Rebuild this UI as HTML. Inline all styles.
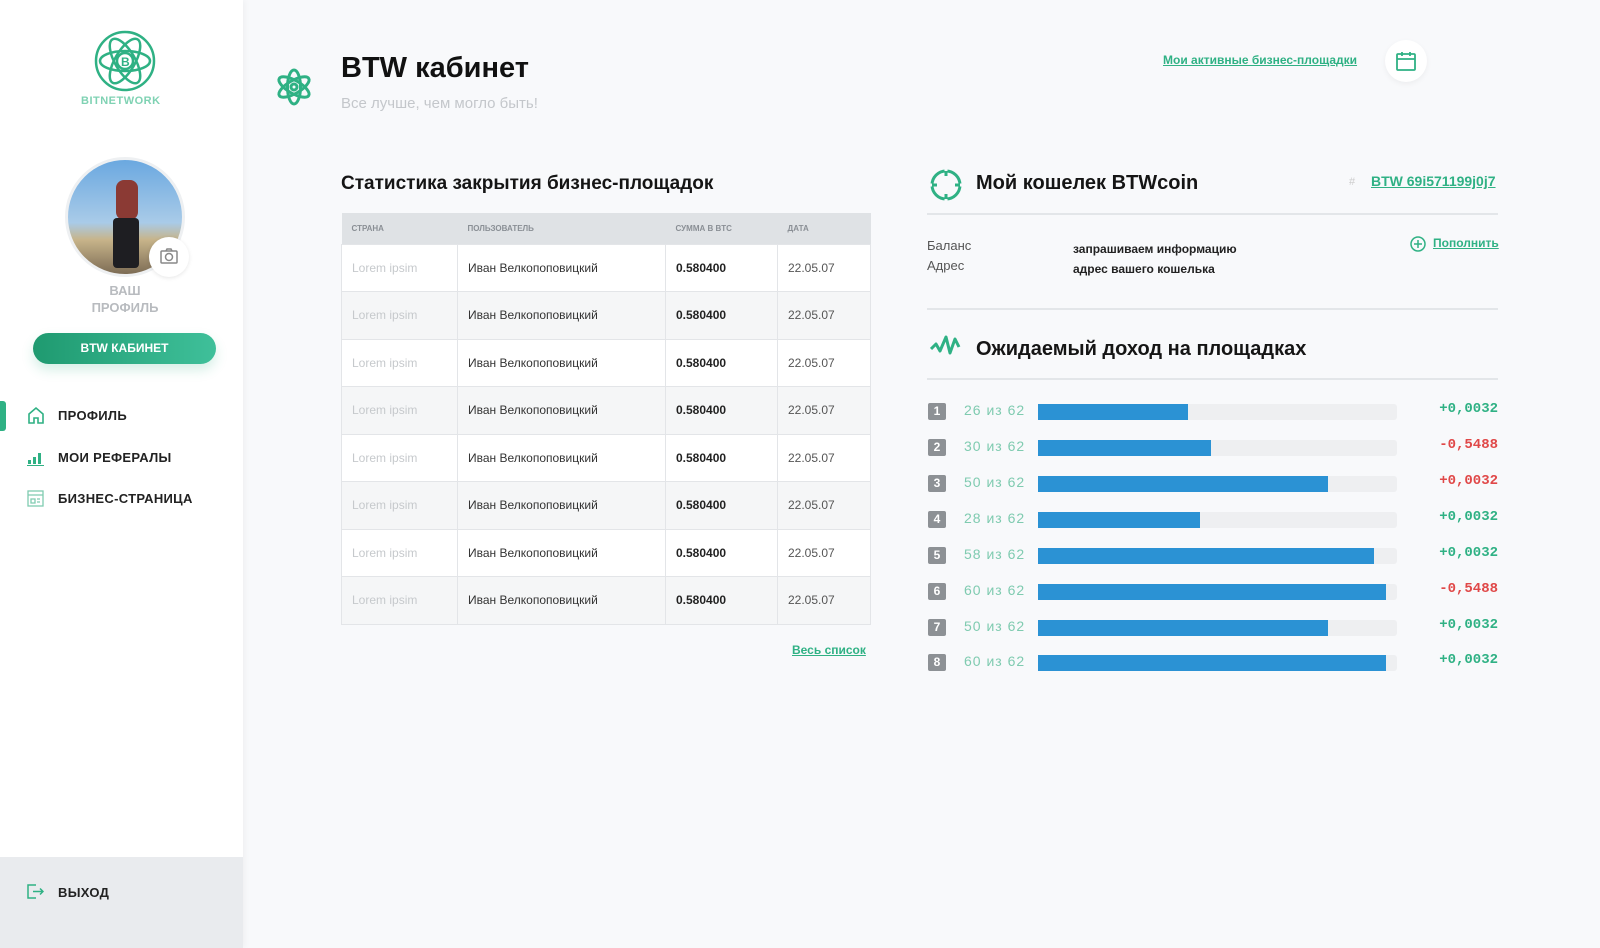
<!DOCTYPE html>
<html><head><meta charset="utf-8">
<style>
*{margin:0;padding:0;box-sizing:border-box}
body{width:1600px;height:948px;background:#f8f9fb;font-family:"Liberation Sans",sans-serif;position:relative;overflow:hidden;color:#1a1a1a}
.abs{position:absolute}
.side{left:0;top:0;width:243px;height:948px;background:#fff;box-shadow:2px 0 6px rgba(0,0,0,.04)}
.nav{left:58px;font-size:13px;font-weight:bold;color:#222;letter-spacing:.3px}
table{border-collapse:collapse;position:absolute;left:341px;top:213px;width:530px;font-size:12px}
th{background:#dfe2e5;height:31px;text-align:left;font-size:8px;color:#8a8f95;padding-left:10px;font-weight:bold}
td{height:47.5px;padding-left:10px;border:1px solid #e3e5e8;color:#333}
tr:nth-child(odd) td{background:#f5f6f7}
tr:nth-child(even) td{background:#fff}
td.c1{color:#c6c9cc}
td.c3{font-weight:bold;color:#222}
td.c4{color:#555}
.row{left:928px;width:570px;height:20px}
.badge{position:absolute;left:0;top:2px;width:18px;height:17px;background:#8d9195;color:#fff;font-size:12px;font-weight:bold;text-align:center;line-height:17px;border-radius:2px}
.lab{position:absolute;left:36px;top:1px;color:#7fcbb0;font-size:14px;letter-spacing:1px}
.track{position:absolute;left:110px;top:3px;width:359px;height:16px;background:#eeeff1;border-radius:3px}
.fill{position:absolute;left:0;top:0;height:16px;background:#2b92d4}
.val{position:absolute;right:0;top:0;font-family:"Liberation Mono",monospace;font-size:14px;font-weight:bold}
.g{color:#2fb184}.r{color:#e04848}
</style></head><body>
<div class="abs side"></div>
<svg class="abs" style="left:93px;top:29px" width="64" height="64" viewBox="0 0 64 64" fill="none" stroke="#2fb184" stroke-width="2.5"><circle cx="32" cy="32" r="29"/><ellipse cx="32" cy="32" rx="25" ry="10" transform="rotate(60 32 32)"/><ellipse cx="32" cy="32" rx="25" ry="10" transform="rotate(-60 32 32)"/><ellipse cx="32" cy="32" rx="25" ry="10"/><circle cx="32" cy="32" r="8"/><text x="28" y="37" font-size="12" fill="#2fb184" stroke="none" font-weight="bold">B</text></svg>
<div class="abs" style="left:81px;top:95px;font-size:11px;font-weight:bold;color:#7fd2b3;letter-spacing:.5px">BITNETWORK</div>
<div class="abs" style="left:65px;top:157px;width:120px;height:120px;border-radius:50%;border:3px solid #eef0f2;background:linear-gradient(180deg,#6aa8e0 0%,#a9cbe8 55%,#c7b48a 70%,#7d6c55 100%);overflow:hidden"><div style="position:absolute;left:48px;top:20px;width:22px;height:40px;background:#8b3a34;border-radius:8px"></div><div style="position:absolute;left:45px;top:58px;width:26px;height:50px;background:#1e1e22;border-radius:4px"></div></div>
<div class="abs" style="left:149px;top:237px;width:40px;height:40px;border-radius:50%;background:#fff;box-shadow:0 1px 4px rgba(0,0,0,.1)"><svg style="margin:11px" width="18" height="16" viewBox="0 0 18 16" fill="none" stroke="#888" stroke-width="1.5"><rect x="1" y="3" width="16" height="12" rx="1"/><circle cx="9" cy="9" r="3.5"/><path d="M6 3l1-2h4l1 2"/></svg></div>
<div class="abs" style="left:0;width:250px;top:282px;text-align:center;font-size:13px;font-weight:bold;color:#b8bbbf;line-height:17px">ВАШ<br>ПРОФИЛЬ</div>
<div class="abs" style="left:33px;top:333px;width:183px;height:31px;border-radius:16px;background:linear-gradient(90deg,#1f9a70,#3fc09a);color:#fff;font-size:12px;font-weight:bold;text-align:center;line-height:31px;box-shadow:0 6px 12px rgba(47,177,132,.2)">BTW КАБИНЕТ</div>
<div class="abs" style="left:0;top:401px;width:6px;height:30px;background:#2fb184;border-radius:0 3px 3px 0"></div>
<svg class="abs" style="left:27px;top:406px" width="18" height="18" viewBox="0 0 18 18" fill="none" stroke="#2fb184" stroke-width="1.6"><path d="M2 8L9 2l7 6v9h-5v-5H7v5H2z"/></svg>
<div class="abs nav" style="top:408px">ПРОФИЛЬ</div>
<svg class="abs" style="left:27px;top:450px" width="18" height="16" viewBox="0 0 18 16" fill="#2fb184"><rect x="1" y="10" width="3" height="4"/><rect x="6" y="7" width="3" height="7"/><rect x="11" y="3" width="3" height="11"/><rect x="0" y="15" width="17" height="1"/></svg>
<div class="abs nav" style="top:450px">МОИ РЕФЕРАЛЫ</div>
<svg class="abs" style="left:27px;top:490px" width="17" height="17" viewBox="0 0 17 17" fill="none" stroke="#7fcbb0" stroke-width="1.3"><rect x="1" y="1" width="15" height="15"/><path d="M1 5h15M4 9h4v4H4zM10 9h3M10 12h3"/></svg>
<div class="abs nav" style="top:491px">БИЗНЕС-СТРАНИЦА</div>
<div class="abs" style="left:0;top:857px;width:243px;height:91px;background:#e9ebee"></div>
<svg class="abs" style="left:27px;top:884px" width="17" height="15" viewBox="0 0 17 15" fill="none" stroke="#2fb184" stroke-width="1.5"><path d="M9 1H1v13h8M6 7.5h10M13 4.5l3 3-3 3"/></svg>
<div class="abs nav" style="top:885px">ВЫХОД</div>

<svg class="abs" style="left:275px;top:66px" width="38" height="42" viewBox="0 0 38 42" fill="none" stroke="#2fb184" stroke-width="3"><ellipse cx="19" cy="21" rx="17" ry="6.5" transform="rotate(90 19 21)"/><ellipse cx="19" cy="21" rx="17" ry="6.5" transform="rotate(30 19 21)"/><ellipse cx="19" cy="21" rx="17" ry="6.5" transform="rotate(-30 19 21)"/><circle cx="19" cy="21" r="3"/></svg>
<div class="abs" style="left:341px;top:52px;font-size:29px;font-weight:bold;color:#111">BTW кабинет</div>
<div class="abs" style="left:341px;top:95px;font-size:15px;color:#c4c7cb">Все лучше, чем могло быть!</div>
<div class="abs" style="left:1163px;top:53px;font-size:12px;font-weight:bold;color:#2fb184;text-decoration:underline">Мои активные бизнес-площадки</div>
<div class="abs" style="left:1385px;top:40px;width:42px;height:42px;border-radius:50%;background:#fff;box-shadow:0 2px 6px rgba(0,0,0,.05)"><svg style="margin:11px" width="20" height="20" viewBox="0 0 20 20" fill="none" stroke="#2fb184" stroke-width="1.8"><rect x="1" y="3" width="18" height="16" rx="1"/><path d="M1 8h18M6 1v4M14 1v4"/></svg></div>

<div class="abs" style="left:341px;top:173px;font-size:19px;font-weight:bold;color:#151515">Статистика закрытия бизнес-площадок</div>
<table>
<tr><th style="width:116px">СТРАНА</th><th style="width:208px">ПОЛЬЗОВАТЕЛЬ</th><th style="width:112px">СУММА В BTC</th><th>ДАТА</th></tr>
<tr><td class="c1">Lorem ipsim</td><td>Иван Велкопоповицкий</td><td class="c3">0.580400</td><td class="c4">22.05.07</td></tr>
<tr><td class="c1">Lorem ipsim</td><td>Иван Велкопоповицкий</td><td class="c3">0.580400</td><td class="c4">22.05.07</td></tr>
<tr><td class="c1">Lorem ipsim</td><td>Иван Велкопоповицкий</td><td class="c3">0.580400</td><td class="c4">22.05.07</td></tr>
<tr><td class="c1">Lorem ipsim</td><td>Иван Велкопоповицкий</td><td class="c3">0.580400</td><td class="c4">22.05.07</td></tr>
<tr><td class="c1">Lorem ipsim</td><td>Иван Велкопоповицкий</td><td class="c3">0.580400</td><td class="c4">22.05.07</td></tr>
<tr><td class="c1">Lorem ipsim</td><td>Иван Велкопоповицкий</td><td class="c3">0.580400</td><td class="c4">22.05.07</td></tr>
<tr><td class="c1">Lorem ipsim</td><td>Иван Велкопоповицкий</td><td class="c3">0.580400</td><td class="c4">22.05.07</td></tr>
<tr><td class="c1">Lorem ipsim</td><td>Иван Велкопоповицкий</td><td class="c3">0.580400</td><td class="c4">22.05.07</td></tr>
</table>
<div class="abs" style="left:792px;top:643px;font-size:12px;font-weight:bold;color:#2fb184;text-decoration:underline">Весь список</div>

<svg class="abs" style="left:929px;top:168px" width="34" height="34" viewBox="0 0 34 34" fill="none" stroke="#2fb184" stroke-width="3"><circle cx="17" cy="17" r="14"/><path d="M17 1v6M17 27v6M1 17h6M27 17h6" stroke="#f8f9fb" stroke-width="3"/><path d="M17 3v5M17 26v5M3 17h5M26 17h5"/></svg>
<div class="abs" style="left:976px;top:172px;font-size:20px;font-weight:bold;color:#151515">Мой кошелек BTWcoin</div>
<div class="abs" style="left:1349px;top:176px;font-size:11px;color:#ccc">#</div>
<div class="abs" style="left:1371px;top:173px;font-size:14px;font-weight:bold;color:#2fb184;text-decoration:underline">BTW 69i571199j0j7</div>
<div class="abs" style="left:927px;top:213px;width:571px;height:2px;background:#e3e6e9"></div>
<div class="abs" style="left:927px;top:236px;font-size:13px;color:#555;line-height:20px">Баланс<br>Адрес</div>
<div class="abs" style="left:1073px;top:239px;font-size:12px;font-weight:bold;color:#222;line-height:20px">запрашиваем информацию<br>адрес вашего кошелька</div>
<svg class="abs" style="left:1410px;top:236px" width="16" height="16" viewBox="0 0 16 16" fill="none" stroke="#2fb184" stroke-width="1.5"><circle cx="8" cy="8" r="7"/><path d="M8 4v8M4 8h8"/></svg>
<div class="abs" style="left:1433px;top:236px;font-size:12px;font-weight:bold;color:#2fb184;text-decoration:underline">Пополнить</div>
<div class="abs" style="left:927px;top:308px;width:571px;height:2px;background:#e3e6e9"></div>
<svg class="abs" style="left:930px;top:333px" width="34" height="24" viewBox="0 0 34 24" fill="none" stroke="#2fb184" stroke-width="3" stroke-linejoin="round"><path d="M1 16l5-5 4 7 6-14 4 16 5-14 4 8"/></svg>
<div class="abs" style="left:976px;top:338px;font-size:20px;font-weight:bold;color:#151515">Ожидаемый доход на площадках</div>
<div class="abs" style="left:927px;top:378px;width:571px;height:2px;background:#e3e6e9"></div>

<div class="abs row" style="top:401px"><div class="badge">1</div><div class="lab">26 из 62</div><div class="track"><div class="fill" style="width:150px"></div></div><div class="val g">+0,0032</div></div>
<div class="abs row" style="top:437px"><div class="badge">2</div><div class="lab">30 из 62</div><div class="track"><div class="fill" style="width:173px"></div></div><div class="val r">-0,5488</div></div>
<div class="abs row" style="top:473px"><div class="badge">3</div><div class="lab">50 из 62</div><div class="track"><div class="fill" style="width:290px"></div></div><div class="val r">+0,0032</div></div>
<div class="abs row" style="top:509px"><div class="badge">4</div><div class="lab">28 из 62</div><div class="track"><div class="fill" style="width:162px"></div></div><div class="val g">+0,0032</div></div>
<div class="abs row" style="top:545px"><div class="badge">5</div><div class="lab">58 из 62</div><div class="track"><div class="fill" style="width:336px"></div></div><div class="val g">+0,0032</div></div>
<div class="abs row" style="top:581px"><div class="badge">6</div><div class="lab">60 из 62</div><div class="track"><div class="fill" style="width:348px"></div></div><div class="val r">-0,5488</div></div>
<div class="abs row" style="top:617px"><div class="badge">7</div><div class="lab">50 из 62</div><div class="track"><div class="fill" style="width:290px"></div></div><div class="val g">+0,0032</div></div>
<div class="abs row" style="top:652px"><div class="badge">8</div><div class="lab">60 из 62</div><div class="track"><div class="fill" style="width:348px"></div></div><div class="val g">+0,0032</div></div>
</body></html>
